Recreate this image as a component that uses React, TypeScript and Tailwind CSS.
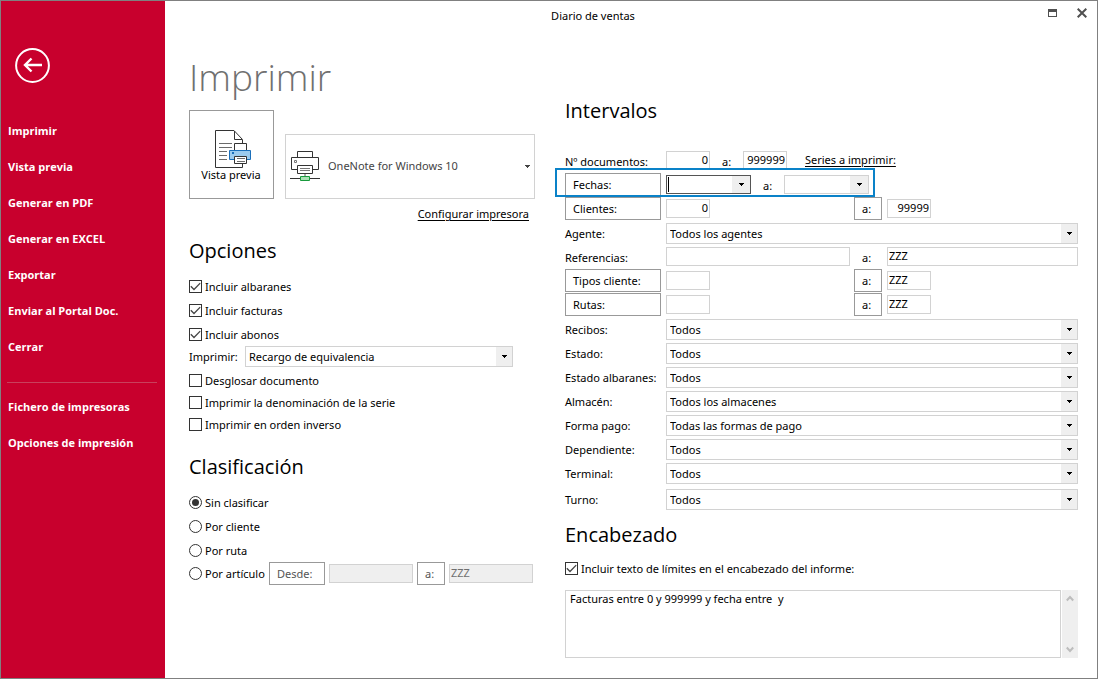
import { useState, type ReactNode } from "react";

const MENU = [
  "Imprimir",
  "Vista previa",
  "Generar en PDF",
  "Generar en EXCEL",
  "Exportar",
  "Enviar al Portal Doc.",
  "Cerrar",
];
const TOOLS = ["Fichero de impresoras", "Opciones de impresión"];

const FILTERS = [
  { id: "recibos", label: "Recibos:", value: "Todos" },
  { id: "estado", label: "Estado:", value: "Todos" },
  { id: "estado-albaranes", label: "Estado albaranes:", value: "Todos" },
  { id: "almacen", label: "Almacén:", value: "Todos los almacenes" },
  { id: "forma-pago", label: "Forma pago:", value: "Todas las formas de pago" },
  { id: "dependiente", label: "Dependiente:", value: "Todos" },
  { id: "terminal", label: "Terminal:", value: "Todos" },
];

function Caret() {
  return (
    <svg width="5" height="3" viewBox="0 0 5 3" shapeRendering="crispEdges" aria-hidden="true">
      <path d="M0 0h5v1H4v1H3v1H2V2H1V1H0z" fill="currentColor" />
    </svg>
  );
}

function Heading({ children, className }: { children: ReactNode; className: string }) {
  return <h2 className={`font-['Open_Sans',sans-serif] text-[20px] leading-7 text-black ${className}`}>{children}</h2>;
}

function MenuLink({ children }: { children: ReactNode }) {
  return (
    <a href="#" className="flex h-9 items-center pl-[7px] font-['Open_Sans',sans-serif] text-[11px] font-bold text-white">
      {children}
    </a>
  );
}

function Check({ label, checked = false }: { label: string; checked?: boolean }) {
  const [on, setOn] = useState(checked);
  return (
    <label className="flex items-center gap-[3px]">
      <span className="grid size-[13px] shrink-0">
        <input
          type="checkbox"
          checked={on}
          onChange={(e) => setOn(e.target.checked)}
          className="size-[13px] appearance-none border border-[#333333] bg-white [grid-area:1/1]"
        />
        {on && (
          <svg viewBox="0 0 13 13" className="pointer-events-none size-[13px] [grid-area:1/1]" aria-hidden="true">
            <path d="M1.800 6.300l3.200 3.200 6.200-6.400" fill="none" stroke="#444444" strokeWidth="1.300" />
          </svg>
        )}
      </span>
      <span className="pt-px">{label}</span>
    </label>
  );
}

function Radio({ label, value, current, onPick }: { label: string; value: string; current: string; onPick: (v: string) => void }) {
  return (
    <label className="flex h-[23px] items-center gap-[3px]">
      <span className="grid size-[13px] shrink-0 place-items-center">
        <input
          type="radio"
          name="clasificacion"
          value={value}
          checked={current === value}
          onChange={() => onPick(value)}
          className="size-[13px] appearance-none rounded-full border border-[#333333] bg-white [grid-area:1/1]"
        />
        {current === value && <span className="pointer-events-none size-[7px] rounded-full bg-[#333333] [grid-area:1/1]" />}
      </span>
      <span className="pt-px">{label}</span>
    </label>
  );
}

function Select({ id, value }: { id: string; value: string }) {
  return (
    <div className="grid h-[21px] min-w-0 flex-1 border border-[#d2d2d2] bg-white">
      <select id={id} className="w-full appearance-none bg-transparent pl-[3px] pr-5 pt-0.5 [grid-area:1/1]">
        <option>{value}</option>
      </select>
      <span className="pointer-events-none flex w-4 items-center justify-center justify-self-end bg-[#efefef] text-black [grid-area:1/1]">
        <Caret />
      </span>
    </div>
  );
}

function Field({ label, value = "", className, disabled = false }: { label: string; value?: string; className: string; disabled?: boolean }) {
  return (
    <input
      type="text"
      aria-label={label}
      defaultValue={value}
      disabled={disabled}
      className={`h-[19px] min-w-0 border border-[#d2d2d2] px-px pb-0.5 leading-4 ${disabled ? "bg-[#efefef] text-[#6f6f6f]" : "bg-white"} ${className}`}
    />
  );
}

function DateField({ label, active = false }: { label: string; active?: boolean }) {
  return (
    <div className={`mt-0.5 flex h-[19px] w-[85px] items-stretch border ${active ? "border-[#555555]" : "border-[#d2d2d2]"}`}>
      {active && <span className="my-px ml-px w-px bg-black" />}
      <input type="text" aria-label={label} className="min-w-0 flex-1 px-px outline-none" />
      <button type="button" aria-label={`Abrir calendario ${label}`} className="flex w-[18px] items-center justify-center bg-[#efefef]">
        <Caret />
      </button>
    </div>
  );
}

function BoxButton({ children, className }: { children: ReactNode; className: string }) {
  return (
    <button type="button" className={`h-[23px] shrink-0 border border-[#999999] bg-white pl-[7px] pt-px text-left ${className}`}>
      {children}
    </button>
  );
}

function RowLabel({ htmlFor, children }: { htmlFor?: string; children: ReactNode }) {
  return (
    <label htmlFor={htmlFor} className="mt-0.5 w-[101px] shrink-0 whitespace-nowrap leading-[22px]">
      {children}
    </label>
  );
}

function PreviewIcon() {
  return (
    <svg width="36" height="38" viewBox="0 0 36 38" aria-hidden="true">
      <path d="M27.500 13V9.500L19 .5H.5v37h27V34" fill="#fff" stroke="#333" />
      <path d="M19.500 1v8.500H27" fill="none" stroke="#333" />
      <path d="M4 13.500h13M4 17.500h13M4 21.500h8M4 25.500h8M4 29.500h8" stroke="#6b6b6b" />
      <path d="M19.500 20.500v-7h12v7" fill="#fff" stroke="#333" />
      <path d="M14.500 20.500h21v9h-21z" fill="#9bcbee" stroke="#1a6fba" />
      <path d="M17 22h2v2h-2z" fill="#1a6fba" />
      <path d="M19.500 26.500h12v7h-12z" fill="#fff" stroke="#333" />
      <path d="M22 28.500h8M22 31.500h8" stroke="#6b6b6b" />
    </svg>
  );
}

function PrinterIcon() {
  return (
    <svg width="30" height="31" viewBox="0 0 30 31" className="shrink-0" aria-hidden="true">
      <path d="M7.500 6.500v-6h15v6" fill="#fff" stroke="#333" />
      <path d="M1.500 6.500h27v12h-27z" fill="#fff" stroke="#333" />
      <path d="M4.500 9.500h2v2h-2z" fill="#fff" stroke="#777" />
      <path d="M7.500 14.500h15v8h-15z" fill="#fff" stroke="#333" />
      <path d="M10 17.500h10M10 19.500h10" stroke="#777" />
      <path d="M15 23v2" stroke="#aaa" strokeWidth="2" />
      <path d="M0 27.500h30" stroke="#333" />
      <path d="M10.500 25.500h9v4h-9z" fill="#a9dfb4" stroke="#189a3c" />
    </svg>
  );
}

function Sidebar() {
  return (
    <nav className="w-[164px] shrink-0 bg-[#c8002d]">
      <button type="button" aria-label="Volver" className="ml-[14px] mt-[47px] block size-[35px]">
        <svg viewBox="0 0 35 35" className="size-[35px]" aria-hidden="true">
          <circle cx="17.500" cy="17.500" r="16.400" fill="none" stroke="#fff" strokeWidth="2" />
          <path d="M10 17h17M16.500 10.500L10 17l6.500 6.500" fill="none" stroke="#fff" strokeWidth="2.400" />
        </svg>
      </button>
      <div className="mt-[30px]">
        {MENU.map((item) => (
          <MenuLink key={item}>{item}</MenuLink>
        ))}
      </div>
      <hr className="mb-[6px] ml-[6px] mr-2 mt-[17px] border-[#c9405c]" />
      {TOOLS.map((item) => (
        <MenuLink key={item}>{item}</MenuLink>
      ))}
    </nav>
  );
}

function PrintColumn() {
  const [sort, setSort] = useState("sin");
  return (
    <section className="w-[346px] shrink-0">
      <h1 className="mt-[22px] font-['Open_Sans',sans-serif] text-[37px] font-light leading-[48px] text-[#707070]">Imprimir</h1>
      <div className="mt-[9px] flex items-end gap-[11px]">
        <button type="button" className="flex h-[89px] w-[85px] shrink-0 flex-col items-center justify-center border border-[#999999] pt-1">
          <span className="pl-[3px]">
            <PreviewIcon />
          </span>
          <span className="-mt-px pr-px leading-4">Vista previa</span>
        </button>
        <button type="button" className="flex h-[65px] flex-1 items-center border border-[#d2d2d2] pl-1 pr-[4px] text-[11px] text-[#444444]">
          <PrinterIcon />
          <span className="ml-2 flex-1 text-left">OneNote for Windows 10</span>
          <Caret />
        </button>
      </div>
      <div className="mt-[7px] pr-[6px] text-right text-[11px] leading-4">
        <a href="#" className="underline underline-offset-2">
          Configurar impresora
        </a>
      </div>

      <Heading className="mt-[15px]">Opciones</Heading>
      <div className="mt-[10px] grid auto-rows-[23px] gap-px">
        <Check label="Incluir albaranes" checked />
        <Check label="Incluir facturas" checked />
        <Check label="Incluir abonos" checked />
      </div>
      <div className="flex items-center pr-[22px]">
        <label htmlFor="recargo" className="w-[56px] pt-px">
          Imprimir:
        </label>
        <Select id="recargo" value="Recargo de equivalencia" />
      </div>
      <div className="mt-[3px] grid auto-rows-[21px] gap-px">
        <Check label="Desglosar documento" />
        <Check label="Imprimir la denominación de la serie" />
        <Check label="Imprimir en orden inverso" />
      </div>

      <Heading className="mt-[18px]">Clasificación</Heading>
      <div className="mt-[10px] grid gap-px">
        <Radio label="Sin clasificar" value="sin" current={sort} onPick={setSort} />
        <Radio label="Por cliente" value="cliente" current={sort} onPick={setSort} />
        <Radio label="Por ruta" value="ruta" current={sort} onPick={setSort} />
        <div className="-mt-px flex items-center gap-1">
          <div className="w-[76px] shrink-0 whitespace-nowrap">
            <Radio label="Por artículo" value="articulo" current={sort} onPick={setSort} />
          </div>
          <BoxButton className="w-[56px] text-[#555555]">Desde:</BoxButton>
          <Field label="Desde artículo" className="w-[84px]" disabled />
          <BoxButton className="w-[28px] text-[#555555]">a:</BoxButton>
          <Field label="Hasta artículo" value="ZZZ" className="w-[84px]" disabled />
        </div>
      </div>
    </section>
  );
}

function CodeRow({ name, from = "", to, numeric = false }: { name: string; from?: string; to: string; numeric?: boolean }) {
  const align = numeric ? "text-right" : "text-left";
  return (
    <div className="flex h-6 items-start">
      <BoxButton className="mr-[5px] w-[96px]">{name}:</BoxButton>
      <div className="mr-1 w-[184px] shrink-0">
        <Field label={`${name} desde`} value={from} className={`mt-0.5 block w-[44px] ${align}`} />
      </div>
      <BoxButton className="mr-[5px] w-[28px]">a:</BoxButton>
      <Field label={`${name} hasta`} value={to} className={`mt-0.5 w-[44px] ${align}`} />
    </div>
  );
}

function RangeColumn() {
  return (
    <section className="min-w-0 flex-1">
      <Heading className="mt-[66px]">Intervalos</Heading>
      <div className="mt-6">
        <div className="flex h-6 items-start">
          <RowLabel htmlFor="documentos">Nº documentos:</RowLabel>
          <input
            id="documentos"
            type="text"
            defaultValue="0"
            className="mt-0.5 h-[19px] w-[44px] min-w-0 border border-[#d2d2d2] bg-white px-px pb-0.5 text-right leading-4"
          />
          <span className="mt-0.5 w-[33px] pl-3 leading-[22px]">a:</span>
          <Field label="Documento final" value="999999" className="mt-0.5 w-[44px] text-right" />
          <a href="#" className="ml-[18px] leading-[22px] underline underline-offset-2">
            Series a imprimir:
          </a>
        </div>
        <div className="relative flex h-6 items-start">
          <BoxButton className="mr-[5px] w-[96px]">Fechas:</BoxButton>
          <DateField label="Fecha inicial" active />
          <span className="mt-0.5 w-[33px] pl-3 leading-[22px]">a:</span>
          <DateField label="Fecha final" />
          <div className="pointer-events-none absolute -left-[10px] -top-[5px] h-[29px] w-[320px] border-2 border-[#0a82c8]" />
        </div>
        <CodeRow name="Clientes" from="0" to="99999" numeric />
        <div className="flex h-6 items-start">
          <RowLabel htmlFor="agente">Agente:</RowLabel>
          <div className="mt-0.5 flex min-w-0 flex-1">
            <Select id="agente" value="Todos los agentes" />
          </div>
        </div>
        <div className="flex h-6 items-start">
          <RowLabel htmlFor="referencias">Referencias:</RowLabel>
          <input
            id="referencias"
            type="text"
            className="mt-0.5 h-[19px] w-[184px] shrink-0 border border-[#d2d2d2] bg-white px-px pb-0.5 leading-4"
          />
          <span className="mt-0.5 w-[37px] shrink-0 pl-3 leading-[22px]">a:</span>
          <Field label="Referencia final" value="ZZZ" className="mt-0.5 flex-1" />
        </div>
        <CodeRow name="Tipos cliente" to="ZZZ" />
        <CodeRow name="Rutas" to="ZZZ" />
        {FILTERS.map((f) => (
          <div key={f.id} className="flex h-6 items-start">
            <RowLabel htmlFor={f.id}>{f.label}</RowLabel>
            <div className="mt-0.5 flex min-w-0 flex-1">
              <Select id={f.id} value={f.value} />
            </div>
          </div>
        ))}
        <div className="mt-0.5 flex h-6 items-start">
          <RowLabel htmlFor="turno">Turno:</RowLabel>
          <div className="mt-0.5 flex min-w-0 flex-1">
            <Select id="turno" value="Todos" />
          </div>
        </div>
      </div>

      <Heading className="mt-[10px]">Encabezado</Heading>
      <div className="mt-2 grid auto-rows-[23px]">
        <Check label="Incluir texto de límites en el encabezado del informe:" checked />
      </div>
      <div className="mt-[10px] flex h-[68px] gap-px">
        <textarea
          aria-label="Texto del encabezado"
          defaultValue="Facturas entre 0 y 999999 y fecha entre  y"
          className="min-w-0 flex-1 resize-none border border-[#d2d2d2] px-1 leading-4"
        />
        <div className="flex w-4 flex-col items-center justify-between bg-[#efefef] py-[5px] text-[#bdbdbd]">
          <button type="button" aria-label="Subir">
            <svg width="8" height="7" viewBox="0 0 8 7" className="block" aria-hidden="true">
              <path d="M.8 5.500L4 2l3.200 3.500" fill="none" stroke="currentColor" strokeWidth="2" />
            </svg>
          </button>
          <button type="button" aria-label="Bajar">
            <svg width="8" height="7" viewBox="0 0 8 7" className="block" aria-hidden="true">
              <path d="M.8 1.500L4 5l3.200-3.500" fill="none" stroke="currentColor" strokeWidth="2" />
            </svg>
          </button>
        </div>
      </div>
    </section>
  );
}

export default function App() {
  return (
    <div className="flex min-h-screen border border-[#808080] bg-white font-['Noto_Sans','Open_Sans',sans-serif] text-[11px] text-black">
      <Sidebar />
      <main className="flex min-w-0 flex-1 flex-col">
        <header className="flex h-[30px] items-center">
          <div className="flex-1 text-center text-[11px]">Diario de ventas</div>
          <div className="flex w-[76px] items-center gap-[19px] pb-[6px] pl-[27px]">
            <button type="button" aria-label="Maximizar">
              <svg width="10" height="10" viewBox="0 0 10 10" className="block" shapeRendering="crispEdges" aria-hidden="true">
                <path d="M.5 1.500h8v7h-8z" fill="none" stroke="#505050" />
                <path d="M0 1h9v3H0z" fill="#505050" />
              </svg>
            </button>
            <button type="button" aria-label="Cerrar ventana">
              <svg width="10" height="10" viewBox="0 0 10 10" className="block" aria-hidden="true">
                <path d="M.7.7l8.600 8.600M9.300.7L.7 9.300" stroke="#505050" strokeWidth="2" />
              </svg>
            </button>
          </div>
        </header>
        <div className="flex gap-[30px] pb-5 pl-6 pr-[19px]">
          <PrintColumn />
          <RangeColumn />
        </div>
      </main>
    </div>
  );
}
